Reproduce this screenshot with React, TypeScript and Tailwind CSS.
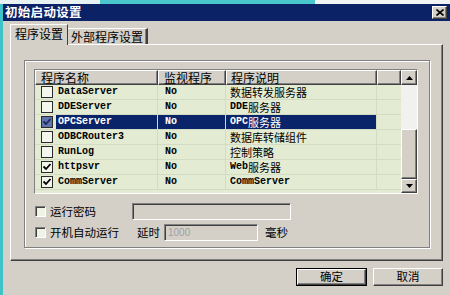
import React from "react";

type Row = { name: string; mon: string; desc: string; checked: boolean; sel?: boolean };

const rows: Row[] = [
  { name: "DataServer", mon: "No", desc: "数据转发服务器", checked: false },
  { name: "DDEServer", mon: "No", desc: "DDE服务器", checked: false },
  { name: "OPCServer", mon: "No", desc: "OPC服务器", checked: true, sel: true },
  { name: "ODBCRouter3", mon: "No", desc: "数据库转储组件", checked: false },
  { name: "RunLog", mon: "No", desc: "控制策略", checked: false },
  { name: "httpsvr", mon: "No", desc: "Web服务器", checked: true },
  { name: "CommServer", mon: "No", desc: "CommServer", checked: true },
];

function Mixed({ text }: { text: string }) {
  const parts = text.split(/([\x00-\x7f]+)/).filter(Boolean);
  return (
    <>
      {parts.map((p, i) =>
        /^[\x00-\x7f]+$/.test(p) ? (
          <span key={i} className="font-['Liberation_Mono',monospace] text-[10px] font-bold">
            {p}
          </span>
        ) : (
          <span key={i} className="font-['Noto_Sans_CJK_SC',sans-serif] text-[11px]">
            {p}
          </span>
        )
      )}
    </>
  );
}

function Check({ color = "#000" }: { color?: string }) {
  return (
    <svg width="10" height="10" viewBox="0 0 10 10">
      <path d="M1.5 4.5 L4 7 L8.5 2" stroke={color} strokeWidth="1.8" fill="none" />
    </svg>
  );
}

function ListBox({ checked, sel }: { checked: boolean; sel?: boolean }) {
  return (
    <div
      className={`w-[12px] h-[12px] border border-[#2a2a2a] flex items-center justify-center ${
        sel ? "bg-[#5f73ad]" : "bg-[#f3f6ec]"
      }`}
    >
      {checked && <Check color={sel ? "#1a2a5a" : "#000"} />}
    </div>
  );
}

function SmallBox() {
  return (
    <div className="w-[11px] h-[11px] border-t border-l border-[#808080] border-b border-r border-b-white border-r-white bg-[#eef3e6] shadow-[inset_1px_1px_0_#404040]" />
  );
}

function Arrow({ up }: { up?: boolean }) {
  return (
    <svg width="7" height="4" viewBox="0 0 7 4">
      {up ? <path d="M3.5 0 L7 4 L0 4 Z" fill="#000" /> : <path d="M0 0 L7 0 L3.5 4 Z" fill="#000" />}
    </svg>
  );
}

const raised =
  "bg-[#d4d0c8] border-t border-l border-white border-r border-b border-r-[#404040] border-b-[#404040] shadow-[inset_-1px_-1px_0_#808080]";

export default function App() {
  return (
    <div className="w-[450px] h-[295px] overflow-hidden flex flex-col bg-[#d4d0c8] font-['Noto_Sans_CJK_SC',sans-serif] text-black">
      <div className="h-[4px] flex">
        <div className="w-[100px] bg-[#e8f2f2]" />
        <div className="w-[215px] bg-[#49c7cc]" />
        <div className="flex-1 bg-[#f2f4f4]" />
      </div>
      <div className="flex flex-1">
        <div className="w-[3px] bg-[#3fc3c8]" />
        <div className="flex-1 flex flex-col">
          {/* Title bar */}
          <div className="h-[17px] bg-[#0b2266] flex items-center justify-between pl-[2px] pr-[3px]">
            <span className="text-white font-bold text-[12.5px] leading-none tracking-[0.3px]">初始启动设置</span>
            <div className={`w-[15px] h-[13px] ${raised} flex items-center justify-center`}>
              <svg width="8" height="7" viewBox="0 0 8 7">
                <path d="M0.5 0.5 L7.5 6.5 M7.5 0.5 L0.5 6.5" stroke="#000" strokeWidth="1.6" />
              </svg>
            </div>
          </div>

          {/* Body */}
          <div className="flex-1 flex flex-col pl-[7px] pt-[3px]">
            {/* Tabs */}
            <div className="flex items-end h-[20px]">
              <div className="relative z-10 -mb-px w-[58px] h-[21px] bg-[#d4d0c8] border-t border-l border-white border-r border-r-[#404040] flex items-center justify-center text-[12px] leading-none pb-[2px]">
                程序设置
              </div>
              <div className="w-[80px] h-[16px] border-t border-white border-r-2 border-r-[#404040] shadow-[inset_-1px_0_0_#808080] flex items-center justify-center text-[12px] leading-none">
                外部程序设置
              </div>
            </div>

            {/* Panel */}
            <div className="w-[433px] h-[217px] border-t border-l border-white border-r border-b border-r-[#404040] border-b-[#404040] shadow-[inset_-1px_-1px_0_#808080] pl-[13px] pt-[15px]">
              {/* Group */}
              <div className="w-[406px] h-[188px] border border-[#808080] shadow-[1px_1px_0_#ffffff,inset_1px_1px_0_#ffffff] pl-[9px] pt-[8px] flex flex-col">
                {/* List */}
                <div className="w-[384px] h-[125px] border border-t-[#808080] border-l-[#808080] border-r-white border-b-white flex overflow-hidden">
                  <div className="flex-1 flex flex-col bg-[#e3ecd3]">
                    <div className="h-[15px] flex text-[12px] leading-none">
                      <div className={`w-[123px] ${raised} flex items-center pl-[5px]`}>程序名称</div>
                      <div className={`w-[68px] ${raised} flex items-center pl-[5px]`}>监视程序</div>
                      <div className={`w-[151px] ${raised} flex items-center pl-[4px]`}>程序说明</div>
                      <div className={`flex-1 ${raised}`} />
                    </div>
                    {rows.map((r) => (
                      <div key={r.name} className="h-[15px] flex border-b border-[#d3dcc3] leading-none">
                        <div className="w-[123px] flex items-center border-r border-[#d3dcc3]">
                          <div className="w-[21px] pl-[6px]">
                            <ListBox checked={r.checked} sel={r.sel} />
                          </div>
                          <div className={`flex-1 h-full flex items-center pl-[2px] ${r.sel ? "bg-[#0a246a] text-white" : ""}`}>
                            <Mixed text={r.name} />
                          </div>
                        </div>
                        <div className={`w-[68px] flex items-center pl-[7px] border-r border-[#d3dcc3] ${r.sel ? "bg-[#0a246a] text-white" : ""}`}>
                          <Mixed text={r.mon} />
                        </div>
                        <div className={`w-[151px] flex items-center pl-[4px] border-r border-[#d3dcc3] ${r.sel ? "bg-[#0a246a] text-white" : ""}`}>
                          <Mixed text={r.desc} />
                        </div>
                        <div className="flex-1" />
                      </div>
                    ))}
                  </div>
                  {/* Scrollbar */}
                  <div className="w-[16px] flex flex-col">
                    <div className={`h-[15px] ${raised} flex items-center justify-center`}>
                      <Arrow up />
                    </div>
                    <div className="h-[44px] bg-[#f1f1ef]" />
                    <div className={`h-[50px] ${raised}`} />
                    <div className={`h-[14px] ${raised} flex items-center justify-center`}>
                      <Arrow />
                    </div>
                  </div>
                </div>

                {/* Options */}
                <div className="mt-[9px] h-[17px] flex items-center text-[11.5px] leading-none">
                  <div className="ml-[1px] mr-[4px]">
                    <SmallBox />
                  </div>
                  <span className="w-[82px]">运行密码</span>
                  <div className="w-[159px] h-[17px] border border-t-[#808080] border-l-[#808080] border-r-white border-b-white shadow-[inset_1px_1px_0_#404040]" />
                </div>
                <div className="mt-[4px] h-[17px] flex items-center text-[11.5px] leading-none">
                  <div className="ml-[1px] mr-[4px]">
                    <SmallBox />
                  </div>
                  <span className="w-[87px]">开机自动运行</span>
                  <span className="w-[27px]">延时</span>
                  <div className="w-[94px] h-[17px] border border-t-[#808080] border-l-[#808080] border-r-white border-b-white shadow-[inset_1px_1px_0_#404040] flex items-center pl-[3px]">
                    <span className="font-['Liberation_Sans',sans-serif] text-[10px] text-[#a0a0a0]">1000</span>
                  </div>
                  <span className="ml-[7px]">毫秒</span>
                </div>
              </div>
            </div>

            {/* Buttons */}
            <div className="mt-[7px] flex justify-end gap-[6px] pr-[7px]">
              <div className="w-[71px] h-[18px] border border-black">
                <div className={`w-full h-full ${raised} flex items-center justify-center text-[11.5px] leading-none`}>
                  确定
                </div>
              </div>
              <div className={`w-[70px] h-[18px] ${raised} flex items-center justify-center text-[11.5px] leading-none`}>
                取消
              </div>
            </div>
          </div>
        </div>
      </div>
    </div>
  );
}
